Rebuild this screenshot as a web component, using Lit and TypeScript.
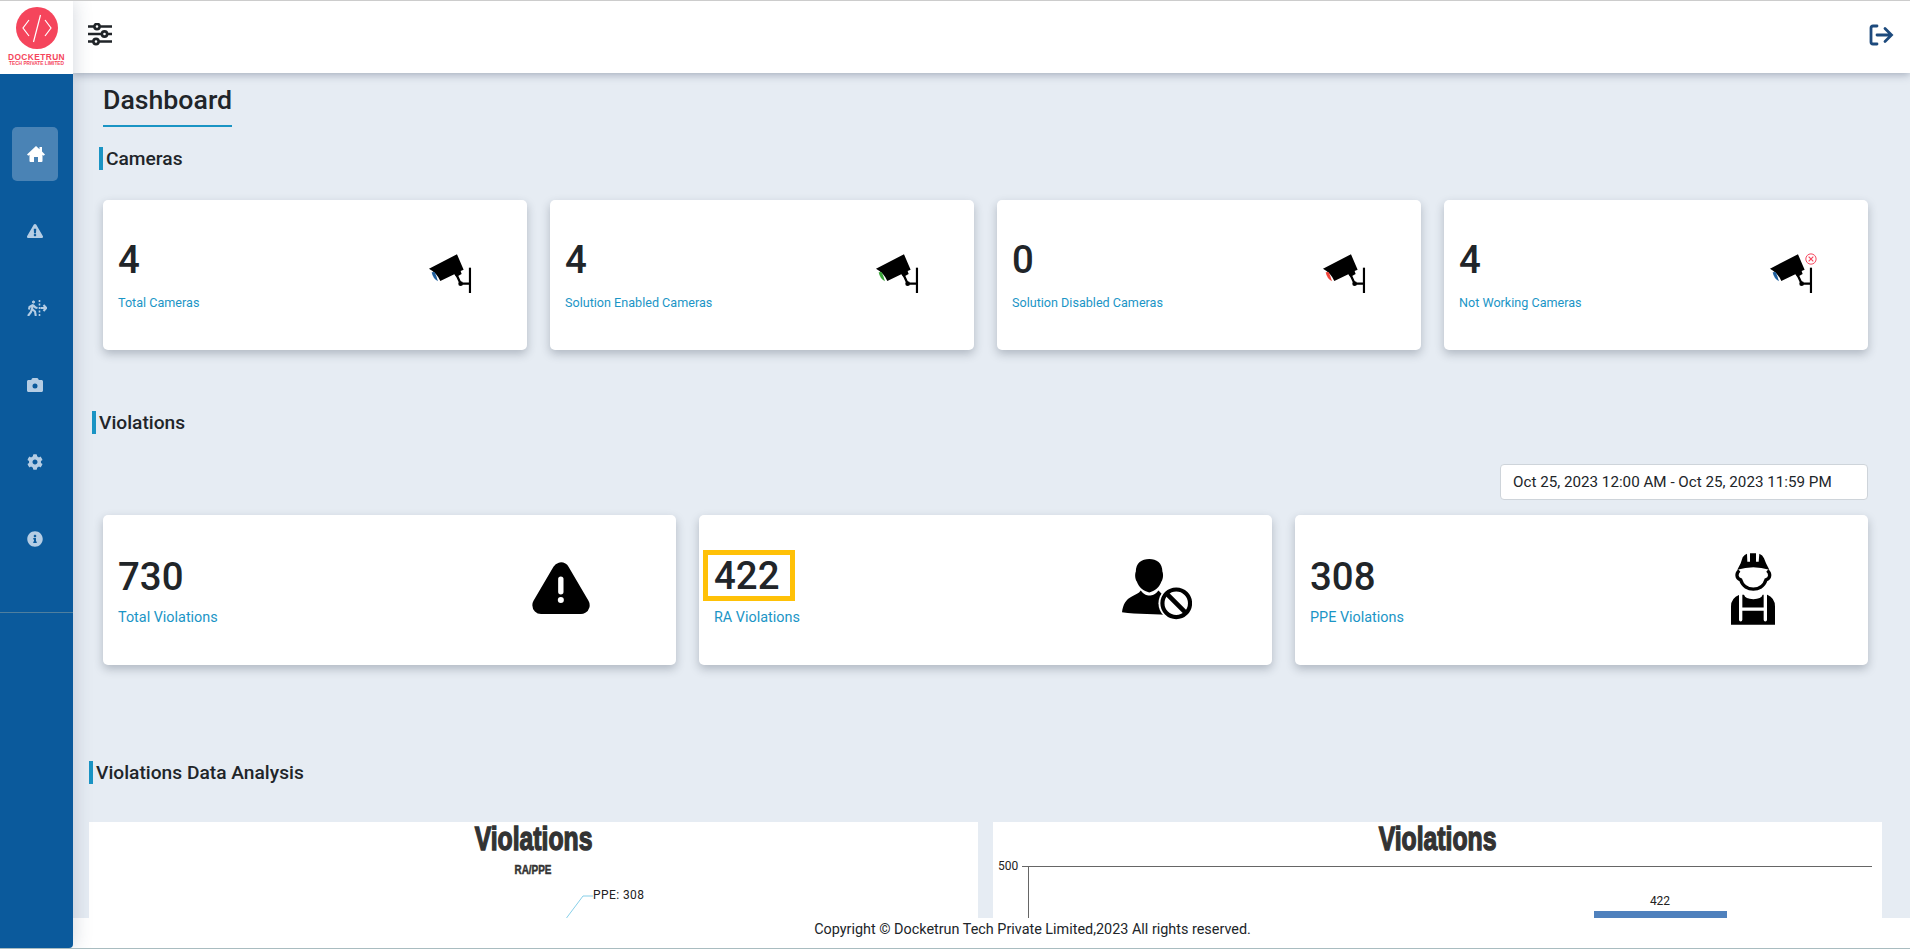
import { LitElement, html, css, svg } from "lit";
import { customElement } from "lit/decorators.js";

const camera = (lens: string, broken = false) => html`<svg class="cam" viewBox="85 68 130 122" aria-hidden="true">
  <path d="M88 115 L172 72 L192 118 L183 122 L186 131 L170 140 L164 132 L122 152 Q112 128 88 115 Z" fill="#000"/>
  <path d="M96 126 Q100 146 115 153 Q111 138 105 125 Z" fill="${lens}"/>
  <path d="M170 132 L183 160 L211 160" fill="none" stroke="#000" stroke-width="7"/>
  <circle cx="183" cy="160" r="7" fill="#000"/>
  <path d="M211 112 V188" stroke="#000" stroke-width="6.500"/>
  ${broken
    ? svg`<circle cx="211" cy="86" r="15.5" fill="#fff" stroke="#f5455c" stroke-width="3"/>
          <path d="M204 79 L218 93 M218 79 L204 93" stroke="#f5455c" stroke-width="3.5"/>`
    : ""}
</svg>`;

const warningIcon = html`<svg class="warn" viewBox="97 65 173 155" aria-hidden="true">
  <path d="M183.500 92 L243 194 H124 Z" fill="#000" stroke="#000" stroke-width="52" stroke-linejoin="round"/>
  <rect x="175" y="108" width="16" height="54" rx="8" fill="#fff"/>
  <circle cx="183" cy="178" r="9" fill="#fff"/>
</svg>`;

const personIcon = html`<svg class="person" viewBox="0 0 71 61" aria-hidden="true">
  <path d="M27.700 0 C35 0 41 4 41 13 C42 15 42 20 40 23 C38 29 33 33 27.700 34 C22 33 17 29 15 23 C13 20 13 15 14 13 C14 4 20 0 27.700 0Z" fill="#000"/>
  <path d="M0 54 C1 46 4 41 10 38 C14 36 17 35 19 32 C22 36 25 37 27.700 37 C31 37 34 36 37 32 C40 36 44 38 50 40 L52 57 C35 56 15 56 0 54Z" fill="#000"/>
  <circle cx="55" cy="45" r="18" fill="#fff"/>
  <circle cx="55" cy="45" r="14" fill="#fff" stroke="#000" stroke-width="4.200"/>
  <path d="M45.500 35.500 L64.500 54.500" stroke="#000" stroke-width="4.800"/>
</svg>`;

const workerIcon = html`<svg class="worker" viewBox="93 40 132 215" aria-hidden="true">
  <path d="M112 90 L122 70 L128 52 Q134 44 141 42 L142 66 L150 66 L150 40 L168 40 L168 66 L176 66 L178 42 Q188 46 192 55 L198 70 L208 90 Q160 74 112 90Z" fill="#000"/>
  <path d="M118 92 C108 100 108 115 122 120 C128 140 145 148 160 148 C175 148 192 140 198 120 C212 115 212 100 202 92" fill="none" stroke="#000" stroke-width="10"/>
  <path d="M93 255 V200 Q93 175 118 165 L132 165 Q136 178 160 178 Q184 178 188 165 L202 165 Q225 175 225 200 V255Z" fill="#000"/>
  <path d="M122 163 V240 M196 163 V240 M122 208 H196" fill="none" stroke="#fff" stroke-width="10" stroke-linecap="round"/>
</svg>`;

const navIcons = [
  html`<svg class="ni home" viewBox="0 0 18 16"><path fill="currentColor" d="M9 0 L12.500 3.200 V1 H15 V5.500 L18 8.400 L16.700 9.800 L15.500 8.700 V15 Q15.500 16 14.500 16 H11 V11 H7 V16 H3.500 Q2.500 16 2.500 15 V8.700 L1.300 9.800 L0 8.400 Z"/></svg>`,
  html`<svg class="ni" viewBox="0 0 576 512"><path fill="currentColor" d="M569.517 440.013C587.975 472.007 564.806 512 527.940 512H48.054c-36.937 0-59.999-40.055-41.577-71.987L246.423 23.985c18.467-32.009 64.720-31.951 83.154 0l239.940 416.028zM288 354c-25.405 0-46 20.595-46 46s20.595 46 46 46 46-20.595 46-46-20.595-46-46-46zm-43.673-165.346l7.418 136c.347 6.364 5.609 11.346 11.982 11.346h48.546c6.373 0 11.635-4.982 11.982-11.346l7.418-136c.375-6.874-5.098-12.654-11.982-12.654h-63.383c-6.884 0-12.356 5.780-11.981 12.654z"/></svg>`,
  html`<svg class="ni walk" viewBox="0 0 20 16"><g fill="none" stroke="currentColor" stroke-width="2.100"><circle cx="6.500" cy="2" r="1.100" fill="currentColor" stroke-width="1"/><path d="M6 4.500 L5 9 L8 11.500 L8.800 16 M5 9 L4 12 L1 16 M6 5 L2.500 7 L2 9.500 M6 5 L8.500 7.500 L10.500 8"/><path d="M12.500 0 V16" stroke-width="1.600" stroke-dasharray="2 1.500"/><path d="M13.500 8 H19 M16.500 5 L19.300 8 L16.500 11"/></g></svg>`,
  html`<svg class="ni" viewBox="0 0 512 512"><path fill="currentColor" fill-rule="evenodd" d="M512 144v288c0 26.500-21.500 48-48 48H48c-26.500 0-48-21.500-48-48V144c0-26.500 21.500-48 48-48h88l12.300-32.900c7-18.700 24.900-31.100 44.900-31.100h125.500c20 0 37.900 12.400 44.900 31.100L376 96h88c26.500 0 48 21.500 48 48zM336 288a80 80 0 1 0-160 0a80 80 0 1 0 160 0z"/></svg>`,
  html`<svg class="ni" viewBox="0 0 512 512"><path fill="currentColor" d="M487.400 315.700l-42.600-24.600c4.300-23.200 4.300-47 0-70.200l42.600-24.600c4.900-2.800 7.100-8.600 5.500-14-11.100-35.600-30-67.800-54.700-94.600-3.800-4.100-10-5.100-14.800-2.300L380.800 110c-17.900-15.400-38.500-27.300-60.800-35.100V25.800c0-5.600-3.900-10.500-9.400-11.700-36.700-8.200-74.300-7.800-109.200 0-5.500 1.200-9.400 6.100-9.400 11.700V75c-22.200 7.900-42.800 19.800-60.800 35.100L88.700 85.500c-4.900-2.800-11-1.900-14.800 2.300-24.700 26.700-43.600 58.900-54.700 94.600-1.700 5.400.6 11.200 5.500 14L67.300 221c-4.300 23.200-4.300 47 0 70.200l-42.600 24.600c-4.900 2.800-7.100 8.600-5.500 14 11.100 35.600 30 67.800 54.700 94.600 3.800 4.100 10 5.100 14.800 2.300l42.600-24.600c17.900 15.400 38.500 27.300 60.800 35.100v49.200c0 5.600 3.900 10.500 9.400 11.700 36.700 8.200 74.300 7.800 109.200 0 5.500-1.200 9.400-6.100 9.400-11.700v-49.200c22.200-7.900 42.800-19.800 60.800-35.100l42.600 24.600c4.900 2.800 11 1.900 14.800-2.300 24.700-26.700 43.600-58.900 54.700-94.600 1.500-5.500-.7-11.300-5.600-14.100zM256 336c-44.100 0-80-35.900-80-80s35.900-80 80-80 80 35.900 80 80-35.900 80-80 80z"/></svg>`,
  html`<svg class="ni" viewBox="0 0 512 512"><path fill="currentColor" d="M256 8C119.043 8 8 119.083 8 256c0 136.997 111.043 248 248 248s248-111.003 248-248C504 119.083 392.957 8 256 8zm0 110c23.196 0 42 18.804 42 42s-18.804 42-42 42-42-18.804-42-42 18.804-42 42-42zm56 254c0 6.627-5.373 12-12 12h-88c-6.627 0-12-5.373-12-12v-24c0-6.627 5.373-12 12-12h12v-64h-12c-6.627 0-12-5.373-12-12v-24c0-6.627 5.373-12 12-12h64c6.627 0 12 5.373 12 12v100h12c6.627 0 12 5.373 12 12v24z"/></svg>`,
];

const cameraCards = [
  { n: "4", label: "Total Cameras", lens: "#1f5f9e", broken: false },
  { n: "4", label: "Solution Enabled Cameras", lens: "#3aa53a", broken: false },
  { n: "0", label: "Solution Disabled Cameras", lens: "#f0443a", broken: false },
  { n: "4", label: "Not Working Cameras", lens: "#1f5f9e", broken: true },
];

const violationCards = [
  { n: "730", label: "Total Violations", icon: warningIcon, hl: false },
  { n: "422", label: "RA Violations", icon: personIcon, hl: true },
  { n: "308", label: "PPE Violations", icon: workerIcon, hl: false },
];

@customElement("app-root")
export class AppRoot extends LitElement {
  static styles = css`
    :host {
      display: flex;
      box-sizing: border-box;
      width: 100%;
      height: 949px;
      overflow: hidden;
      background: #fff;
      border-top: 1px solid #ccc;
      border-bottom: 1px solid #a9bcc0;
      font-family: Roboto, "Liberation Sans", sans-serif;
      color: #212529;
    }
    .side {
      width: 73px;
      flex: none;
      display: flex;
      flex-direction: column;
      background: #0b5a9c;
      border-bottom-right-radius: 4px;
      box-shadow: 0 0 20px rgba(40, 60, 90, 0.22);
      position: relative;
      z-index: 3;
    }
    .logo {
      height: 73px;
      background: #fff;
      display: flex;
      flex-direction: column;
      align-items: center;
      padding-top: 6px;
      box-sizing: border-box;
      color: #f5455c;
    }
    .logo svg { width: 42px; height: 42px; flex: none; }
    .logo b {
      font: 700 8.400px/8px "Liberation Sans", sans-serif;
      letter-spacing: 0.4px;
      margin-top: 4px;
      white-space: nowrap;
    }
    .logo small {
      font: 700 4.800px/5px "Liberation Sans", sans-serif;
      white-space: nowrap;
    }
    nav {
      display: flex;
      flex-direction: column;
      align-items: flex-start;
      padding-top: 53px;
      height: 539px;
      box-sizing: border-box;
      border-bottom: 1px solid #4f7f9f;
    }
    .item {
      width: 46px;
      height: 54px;
      margin: 0 0 23px 12px;
      border-radius: 5px;
      display: flex;
      align-items: center;
      padding-left: 15px;
      box-sizing: border-box;
      color: #b5cde4;
    }
    .item.on { background: #4a83b5; color: #fff; }
    .ni { width: 16px; height: 16px; display: block; }
    .ni.home { width: 18px; height: 16px; }
    .ni.walk { width: 20px; height: 16px; }

    .body { flex: 1; min-width: 0; display: flex; flex-direction: column; }
    .top {
      height: 72px;
      flex: none;
      display: flex;
      align-items: center;
      justify-content: space-between;
      padding: 0 16px 0 15px;
      background: #fff;
      box-shadow: 0 2px 8px rgba(50, 60, 90, 0.35);
      position: relative;
      z-index: 2;
    }
    .top .tune { width: 24px; height: 24px; margin-bottom: 5px; }
    .top .out { width: 25px; height: 22px; margin-bottom: 4px; }
    main {
      flex: 1;
      min-height: 0;
      overflow: hidden;
      background: #e6ecf3;
    }
    .title {
      display: inline-block;
      vertical-align: top;
      margin-left: 30px;
      padding: 12px 0 9px;
      border-bottom: 2px solid #1a94c4;
      font-size: 26.700px;
      line-height: 31px;
      font-weight: 500;
    }
    .head {
      height: 23px;
      line-height: 23px;
      border-left: 4px solid #1a94c4;
      font-size: 19.200px;
      font-weight: 500;
    }
    .h1 { margin: 20px 0 30px 26px; padding-left: 3px; }
    .h2 { margin: 61px 0 0 19px; padding-left: 3px; }
    .h3 { margin: 96px 0 0 16px; padding-left: 3px; }
    .cards {
      display: grid;
      gap: 23px;
      margin: 0 42px 0 30px;
    }
    .four { grid-template-columns: repeat(4, 1fr); }
    .three { grid-template-columns: repeat(3, 1fr); }
    .card {
      height: 150px;
      box-sizing: border-box;
      background: #fff;
      border-radius: 5px;
      box-shadow: 0 4px 10px rgba(40, 50, 70, 0.28);
      display: flex;
      align-items: center;
      justify-content: space-between;
    }
    .four .card { padding: 0 56px 3px 15px; }
    .three .card { padding: 0 80px 3px 15px; }
    .txt { margin-bottom: 1.200px; }
    .num { font-size: 38.400px; line-height: 48px; font-weight: 500; margin-top: 5px; }
    .four .num { margin-top: 3px; }
    .hl {
      display: inline-block;
      vertical-align: top;
      border: 5px solid #ffc107;
      line-height: 41px;
      padding: 0 11px 0 6px;
      margin: -3px 0 0 -11px;
    }
    .label { font-size: 12.600px; line-height: 20px; margin-top: 7px; color: #1b95c6; }
    .four .label { margin-top: 9px; }
    .three .label { font-size: 14.400px; }
    .cam { width: 43.300px; height: 40.700px; overflow: visible; flex: none; }
    .iconbox { width: 70px; display: flex; justify-content: center; flex: none; }
    .warn { width: 58px; height: 52px; margin-bottom: 2px; }
    .person { width: 72px; height: 62px; }
    .worker { width: 44px; height: 72px; }
    .dateRow { display: flex; justify-content: flex-end; margin: 30px 42px 15px 0; }
    .date {
      width: 368px;
      height: 36px;
      box-sizing: border-box;
      background: #fff;
      border: 1px solid #ced4da;
      border-radius: 4px;
      padding-left: 12px;
      font-size: 15.200px;
      line-height: 34px;
    }
    .charts {
      display: grid;
      grid-template-columns: 889px 889px;
      gap: 15px;
      margin: 38px 0 0 16px;
    }
    .chart { background: #fff; height: 400px; }
    .chart svg { display: block; width: 889px; height: 367px; }
    .ctitle {
      height: 33px;
      text-align: center;
      font: 700 33px/33px "Liberation Sans", sans-serif;
      color: #333;
      -webkit-text-stroke: 1.400px #333;
    }
    .ctitle span { display: inline-block; transform: scaleX(0.75); }
    .cs { font: 700 12.500px "Liberation Sans", sans-serif; fill: #333; stroke: #333; stroke-width: 0.5px; }
    .cl { font: 400 12px Roboto, sans-serif; fill: #222; }
    footer {
      height: 30px;
      flex: none;
      background: #fff;
      text-align: center;
      padding-left: 82px;
      font-size: 14.400px;
      line-height: 23px;
      position: relative;
      z-index: 1;
    }
  `;

  render() {
    return html`
      <aside class="side">
        <div class="logo">
          <svg viewBox="0 0 42 42" aria-hidden="true">
            <circle cx="21" cy="21" r="21" fill="#f5455c"/>
            <path d="M13 13 L7 21 L13 29 M29 13 L35 21 L29 29 M24.500 8 L17.500 35" fill="none" stroke="#fff" stroke-width="1.200"/>
          </svg>
          <b>DOCKETRUN</b>
          <small>TECH PRIVATE LIMITED</small>
        </div>
        <nav>
          ${navIcons.map((i, idx) => html`<div class="item ${idx === 0 ? "on" : ""}">${i}</div>`)}
        </nav>
      </aside>
      <div class="body">
        <header class="top">
          <svg class="tune" viewBox="0 0 24 24" aria-hidden="true">
            <g fill="#fff" stroke="#212529" stroke-width="2.600">
              <path d="M0 3.500 H24 M0 11 H24 M0 18.500 H24"/>
              <circle cx="9" cy="3.500" r="2.600"/>
              <circle cx="16.500" cy="11" r="2.600"/>
              <circle cx="8" cy="18.500" r="2.600"/>
            </g>
          </svg>
          <svg class="out" viewBox="0 0 25 22" aria-hidden="true">
            <path d="M8 2 H4 Q2 2 2 4 V18 Q2 20 4 20 H8 M8 11 H22 M16 4.500 L22.500 11 L16 17.500" fill="none" stroke="#1d4a7d" stroke-width="2.800" stroke-linecap="round"/>
          </svg>
        </header>
        <main>
          <div class="title">Dashboard</div>
          <div class="head h1">Cameras</div>
          <section class="cards four">
            ${cameraCards.map(
              (c) => html`<div class="card">
                <div class="txt"><div class="num">${c.n}</div><div class="label">${c.label}</div></div>
                ${camera(c.lens, c.broken)}
              </div>`
            )}
          </section>
          <div class="head h2">Violations</div>
          <div class="dateRow"><div class="date">Oct 25, 2023 12:00 AM - Oct 25, 2023 11:59 PM</div></div>
          <section class="cards three">
            ${violationCards.map(
              (c) => html`<div class="card">
                <div class="txt">
                  <div class="num"><span class="${c.hl ? "hl" : ""}">${c.n}</span></div>
                  <div class="label">${c.label}</div>
                </div>
                <div class="iconbox">${c.icon}</div>
              </div>`
            )}
          </section>
          <div class="head h3">Violations Data Analysis</div>
          <section class="charts">
            <div class="chart">
              <div class="ctitle"><span>Violations</span></div>
              <svg viewBox="0 33 889 367">
                <text class="cs" x="444" y="52" text-anchor="middle" textLength="37" lengthAdjust="spacingAndGlyphs">RA/PPE</text>
                <path d="M476 98 L494 74 H504" fill="none" stroke="#87cfe8" stroke-width="1"/>
                <text class="cl" x="504" y="77" textLength="51" lengthAdjust="spacing">PPE: 308</text>
              </svg>
            </div>
            <div class="chart">
              <div class="ctitle"><span>Violations</span></div>
              <svg viewBox="0 33 889 367">
                <text class="cl" x="5" y="48">500</text>
                <path d="M29 44.500 H879" stroke="#666" stroke-width="1"/>
                <path d="M35.500 44 V400" stroke="#666" stroke-width="1"/>
                <text class="cl" x="667" y="83" text-anchor="middle">422</text>
                <rect x="601" y="89" width="133" height="311" fill="#4f81bd"/>
              </svg>
            </div>
          </section>
        </main>
        <footer>Copyright © Docketrun Tech Private Limited,2023 All rights reserved.</footer>
      </div>
    `;
  }
}
